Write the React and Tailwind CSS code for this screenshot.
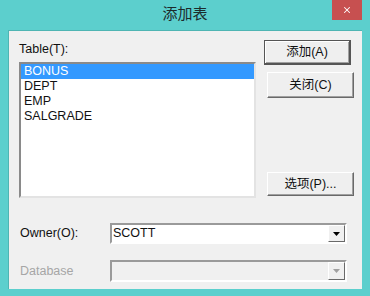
import { X } from "lucide-react";

const tables = ["BONUS", "DEPT", "EMP", "SALGRADE"];

const font = { fontFamily: '"Liberation Sans", "Noto Sans CJK SC", sans-serif' };

function Button({ children, className = "", isDefault }) {
  return (
    <div
      className={
        "flex items-center justify-center w-[87px] text-[12.5px] text-[#111] bg-[#efefef] " +
        (isDefault
          ? "border border-[#555] border-r-2 border-b-2 shadow-[inset_1px_1px_0_#fff,inset_-1px_-1px_0_#a0a0a0] "
          : "border border-t-white border-l-white border-r-[#696969] border-b-[#696969] shadow-[inset_-1px_-1px_0_#a0a0a0] ") +
        className
      }
    >
      {children}
    </div>
  );
}

function Combo({ value, disabled }) {
  return (
    <div className={"flex w-[237px] border-2 border-t-[#9a9a9a] border-l-[#9a9a9a] border-r-white border-b-white " + (disabled ? "h-[22px]" : "h-[21px]")}>
      <div className={"flex flex-1 items-center pl-[1px] text-[12.5px] " + (disabled ? "bg-[#f0f0f0]" : "bg-white text-[#111]")}>
        {value}
      </div>
      <div className="flex w-[17px] items-center justify-center bg-[#f0f0f0] border border-t-white border-l-white border-r-[#696969] border-b-[#696969]">
        <svg width="7" height="4" viewBox="0 0 7 4">
          <path d="M0 0 H7 L3.5 4 Z" fill={disabled ? "#a0a0a0" : "#000"} />
        </svg>
      </div>
    </div>
  );
}

export default function App() {
  return (
    <div className="w-[370px] h-[296px] bg-[#5ccfcd] flex flex-col" style={font}>
      <div className="relative h-[30px] flex items-center justify-center">
        <span className="text-[15px] text-[#1c2b2b] mt-[-2px]">添加表</span>
        <div className="absolute right-[8px] top-0 w-[30px] h-[20px] bg-[#c75050] flex items-center justify-center">
          <X className="w-[10px] h-[10px] text-white" strokeWidth={2.5} />
        </div>
      </div>

      <div className="mx-[8px] h-[259px] bg-[#f0f0f0] border-l border-t border-[#4fb5b3] pl-[10px] pt-[8px]">
        <div className="flex">
          <div className="w-[237px]">
            <div className="h-[20px] leading-[20px] text-[12.5px] text-[#111]">Table(T):</div>
            <div className="mt-[3px] h-[136px] bg-white border-2 border-t-[#8a8a8a] border-l-[#8a8a8a] border-r-[#e3e3e3] border-b-[#e3e3e3]">
              {tables.map((t, i) => (
                <div
                  key={t}
                  className={
                    "h-[15px] leading-[15px] pl-[3px] text-[12.5px] " +
                    (i === 0 ? "bg-[#3399ff] text-white" : "text-[#111]")
                  }
                >
                  {t}
                </div>
              ))}
            </div>
          </div>

          <div className="flex flex-col ml-[8px] pt-[1px]">
            <Button isDefault className="h-[25px]">添加(A)</Button>
            <Button className="h-[26px] mt-[7px] ml-[3px]">关闭(C)</Button>
            <Button className="h-[24px] mt-[74px] ml-[3px]">选项(P)...</Button>
          </div>
        </div>

        <div className="flex items-center mt-[25px]">
          <div className="w-[91px] pl-[1px] text-[12.5px] text-[#111]">Owner(O):</div>
          <Combo value="SCOTT" />
        </div>

        <div className="flex items-center mt-[16px]">
          <div className="w-[91px] pl-[1px] text-[12.5px] text-[#a6a6a6]">Database</div>
          <Combo value="" disabled />
        </div>
      </div>
    </div>
  );
}
